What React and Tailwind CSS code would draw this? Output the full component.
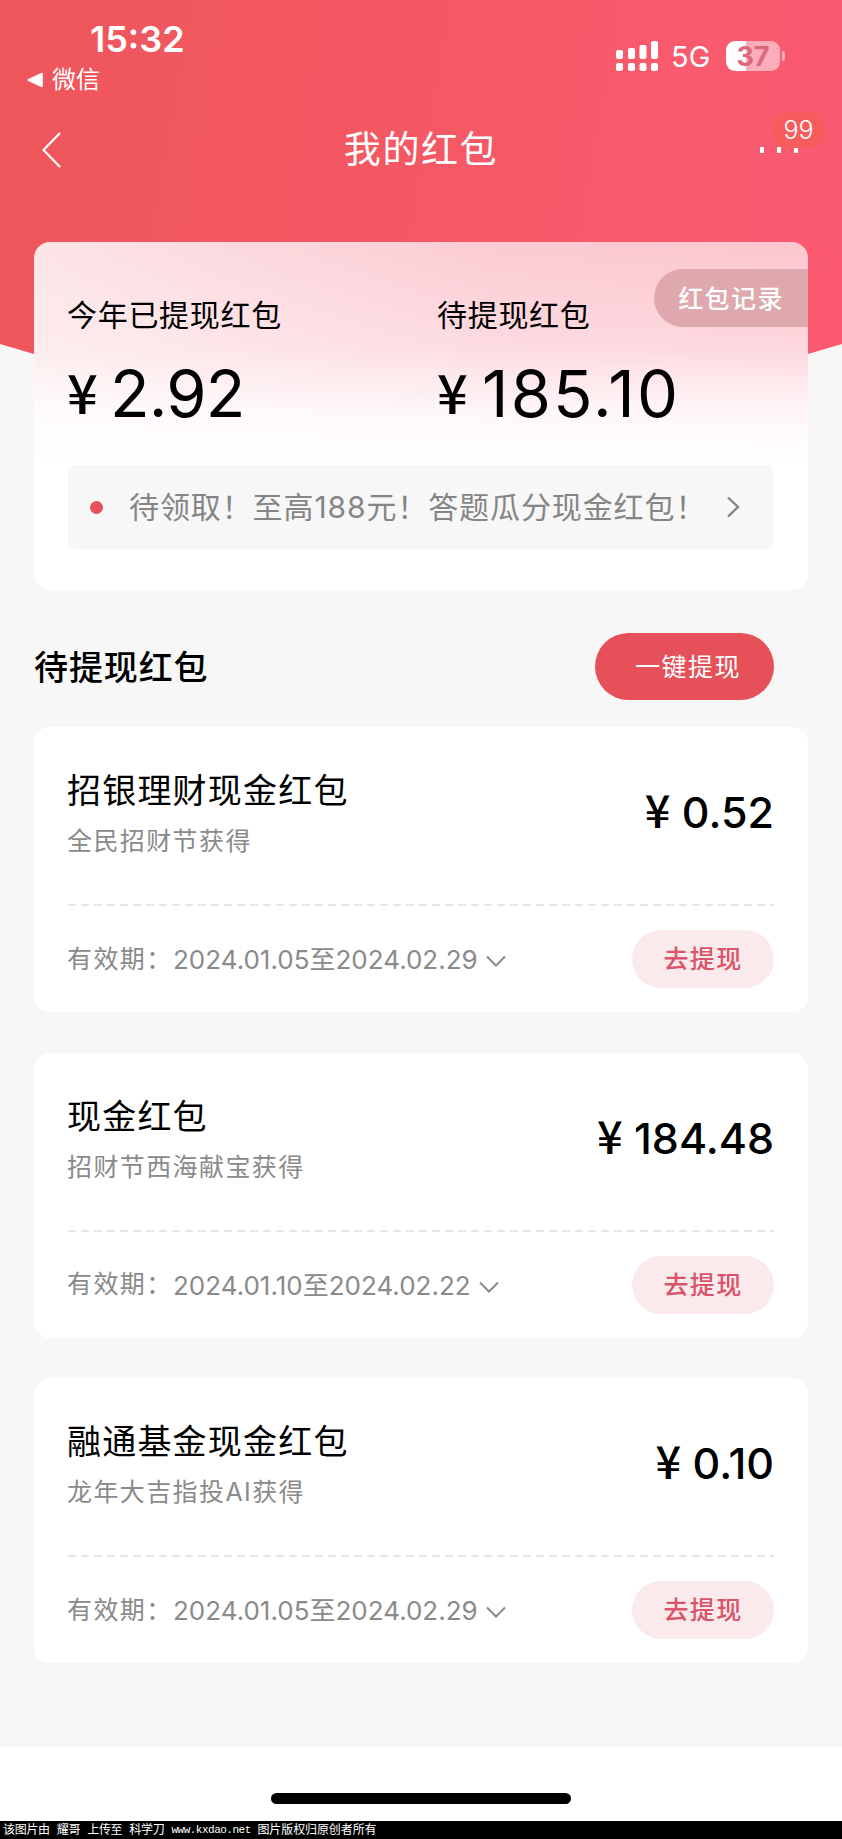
import React from 'react';
import clsx from 'clsx';

const packets = [
  {
    id: 1,
    title: '招银理财现金红包',
    source: '全民招财节获得',
    amount: '0.52',
    from: '2024.01.05',
    to: '2024.02.29',
  },
  {
    id: 2,
    title: '现金红包',
    source: '招财节西海献宝获得',
    amount: '184.48',
    from: '2024.01.10',
    to: '2024.02.22',
  },
  {
    id: 3,
    title: '融通基金现金红包',
    source: '龙年大吉指投AI获得',
    amount: '0.10',
    from: '2024.01.05',
    to: '2024.02.29',
  },
];

export default function App() {
  return (
    <div className="w-[842px] h-[1839px] flex flex-col overflow-hidden bg-[#f7f7f7] text-black whitespace-nowrap font-['Inter','Noto_Sans_CJK_SC',sans-serif]">
      <header className="h-[400px] shrink-0 text-white bg-[linear-gradient(100deg,#ee565b_0%,#f45863_45%,#f95a6d_75%,#fb5a71_100%)] [clip-path:polygon(0_0,100%_0,100%_344px,652px_400px,190px_400px,0_344px)]">
        <StatusBar />
        <NavBar />
      </header>

      <main className="-mt-[158px] h-[1505px] shrink-0 px-[34px]">
        <SummaryCard />

        <div className="flex items-center justify-between mt-[43px] pr-[34px]">
          <h2 className="mt-[2px] text-[34px] leading-[48px] font-medium tracking-[0.9px]">待提现红包</h2>
          <button className="w-[179px] h-[67px] pt-[2px] pl-[7px] rounded-full bg-[#e65058] text-white text-[25px] tracking-[1.4px]">
            一键提现
          </button>
        </div>

        <div className="flex flex-col gap-[40.5px] mt-[27px]">
          {packets.map(packet => (
            <PacketCard key={packet.id} packet={packet} />
          ))}
        </div>
      </main>

      {/* Home indicator */}
      <div className="h-[74px] shrink-0 bg-white flex justify-center pt-[46px]">
        <div className="w-[300px] h-[11px] rounded-full bg-black" />
      </div>

      <footer className="h-[18px] shrink-0 bg-black text-white pl-[3px] flex gap-[7px] text-[12px] leading-[18px] tracking-[-0.3px]">
        <span>该图片由</span>
        <span>耀哥</span>
        <span>上传至</span>
        <span>科学刀</span>
        <span className="w-[79px] text-[11px] tracking-[-0.5px] font-['Liberation_Mono',monospace]">www.kxdao.net</span>
        <span className="tracking-[-0.1px]">图片版权归原创者所有</span>
      </footer>
    </div>
  );
}

function StatusBar() {
  return (
    <div className="flex justify-between h-[97px]">
      <div className="pt-[18px]">
        <div className="pl-[90px] text-[36px] leading-[42px] font-semibold">15:32</div>
        <div className="flex items-center pl-[27px] mt-[5px]">
          <svg width="16" height="16" viewBox="0 0 16 16" fill="currentColor">
            <path d="M1.2 6.9 14 1q1.8-.6 1.8 1.2v11.6q0 1.8-1.8 1.2L1.2 9.1Q-.8 8 1.2 6.9Z" />
          </svg>
          <span className="ml-[9px] text-[24px] leading-[30px]">微信</span>
        </div>
      </div>

      <div className="flex items-center h-[30px] mt-[41px] pr-[57px]">
        <svg width="43" height="30" viewBox="0 0 43 30" fill="currentColor">
          <rect x="0" y="9" width="7" height="9" rx="2" />
          <rect x="12" y="7" width="7" height="11" rx="2" />
          <rect x="23.500" y="4" width="7" height="14" rx="2" />
          <rect x="35" y="0" width="7" height="18" rx="2" />
          <rect x="0" y="22" width="7" height="8" rx="2" />
          <rect x="12" y="22" width="7" height="8" rx="2" />
          <rect x="23.500" y="22" width="7" height="8" rx="2" />
          <rect x="35" y="22" width="7" height="8" rx="2" />
        </svg>
        <span className="ml-[12px] mt-[2px] w-[55px] text-[29px] leading-[30px]">5G</span>
        <div className="w-[54px] h-[30px] rounded-[9px] bg-[linear-gradient(90deg,#fff_20px,#fdadb9_20px)] text-[#dd677c] text-[27px] leading-[31px] font-bold text-center">
          37
        </div>
        <div className="w-[3px] h-[10px] ml-[2px] rounded-r-full bg-[#fdadb9]" />
      </div>
    </div>
  );
}

function NavBar() {
  return (
    <div className="h-[106px] flex items-center justify-between px-[42px]">
      <svg width="20" height="36" viewBox="0 0 20 36" fill="none" stroke="currentColor" strokeWidth="2.200">
        <path d="M18 1 1.500 18 18 35" />
      </svg>
      <h1 className="pl-[20px] text-[37px] tracking-[1.6px]">我的红包</h1>
      <div className="relative flex gap-[13px] pr-[2px]">
        <i className="w-[4px] h-[6px] bg-white" />
        <i className="w-[4px] h-[6px] bg-white" />
        <i className="w-[4px] h-[6px] bg-white" />
        <span className="absolute left-[12px] -top-[35px] w-[53px] h-[36px] rounded-full bg-[#f75c5c] text-[25px] leading-[37px] font-light text-center">
          99
        </span>
      </div>
    </div>
  );
}

function SummaryCard() {
  return (
    <section className="relative h-[348px] px-[34px] pt-[52px] rounded-[16px] overflow-hidden bg-[linear-gradient(180deg,rgba(255,255,255,0.05)_0,rgba(255,255,255,0.35)_105px,rgba(255,255,255,0.85)_170px,#fff_220px),linear-gradient(90deg,#fce3e5_0%,#fbc8d0_60%,#fcc3cc_100%)]">
      <div className="flex">
        <Total label="今年已提现红包" value="2.92" />
        <Total label="待提现红包" value="185.10" />
      </div>

      <div className="flex items-center h-[84px] mt-[28px] pl-[22px] pr-[34px] rounded-[8px] bg-[#f7f7f7] text-[#858585]">
        <i className="size-[13px] rounded-full bg-[#e8505c]" />
        <span className="flex-1 ml-[26px] mt-px text-[30px] tracking-[0.9px]">
          待领取！至高188元！答题瓜分现金红包！
        </span>
        <svg width="14" height="22" viewBox="0 0 14 22" fill="none" stroke="currentColor" strokeWidth="2.400">
          <path d="M2 1.500 12 11 2 20.500" />
        </svg>
      </div>

      <button className="absolute right-0 top-[27px] w-[154px] h-[58px] pt-[3px] rounded-l-full bg-[#dea8ad] text-white text-[25px] font-medium tracking-[1.4px]">
        红包记录
      </button>
    </section>
  );
}

function Total({ label, value }) {
  // Short sums are set a little tighter than long ones
  const tight = value.length < 5;

  return (
    <div className="w-[370px] shrink-0">
      <p className="-ml-px text-[30px] leading-[42px] tracking-[0.7px]">{label}</p>
      <p className="flex items-start h-[83px] mt-[18px]">
        <span className="w-[43px] -ml-px text-[54px] leading-[74px] font-medium font-['Noto_Sans_CJK_SC',sans-serif]">¥</span>
        <span className={clsx('text-[65px] leading-[80px]', tight ? 'tracking-[-0.8px]' : 'pl-[2px] tracking-[2.2px]')}>
          {value}
        </span>
      </p>
    </div>
  );
}

function PacketCard({ packet }) {
  return (
    <article className="h-[285px] px-[34px] rounded-[16px] bg-white">
      <div className="flex items-center justify-between h-[177px]">
        <div className="-ml-px -mt-[4px]">
          <h3 className="text-[34px] leading-[50px] tracking-[1.2px]">{packet.title}</h3>
          <p className="mt-[5px] text-[25px] leading-[40px] tracking-[1.4px] text-[#8a8a8a]">
            {packet.source}
          </p>
        </div>
        <div className="-mt-[10px] flex items-baseline font-medium">
          <span className="w-[37px] text-[45px] leading-[50px] font-['Noto_Sans_CJK_SC',sans-serif]">¥</span>
          <span className="text-[43px] leading-[50px]">{packet.amount}</span>
        </div>
      </div>

      <div className="h-[2px] bg-[repeating-linear-gradient(90deg,#e6e6e6_0,#e6e6e6_8px,transparent_8px,transparent_13px)]" />

      <div className="flex items-center justify-between h-[106px]">
        <div className="flex items-center mt-px text-[#8a8a8a] text-[25px]">
          <span className="w-[106px] -ml-px tracking-[1.4px]">有效期：</span>
          <span className="text-[26px]">
            {packet.from}至{packet.to}
          </span>
          <svg className="ml-[8px] mt-[3px]" width="20" height="12" viewBox="0 0 20 12" fill="none" stroke="currentColor" strokeWidth="2">
            <path d="M1 1.500 10 10.500 19 1.500" />
          </svg>
        </div>
        <button className="w-[142px] h-[58px] pt-[2px] rounded-full bg-[#faeaec] text-[#d9536a] text-[25px] font-medium tracking-[1.4px]">
          去提现
        </button>
      </div>
    </article>
  );
}
